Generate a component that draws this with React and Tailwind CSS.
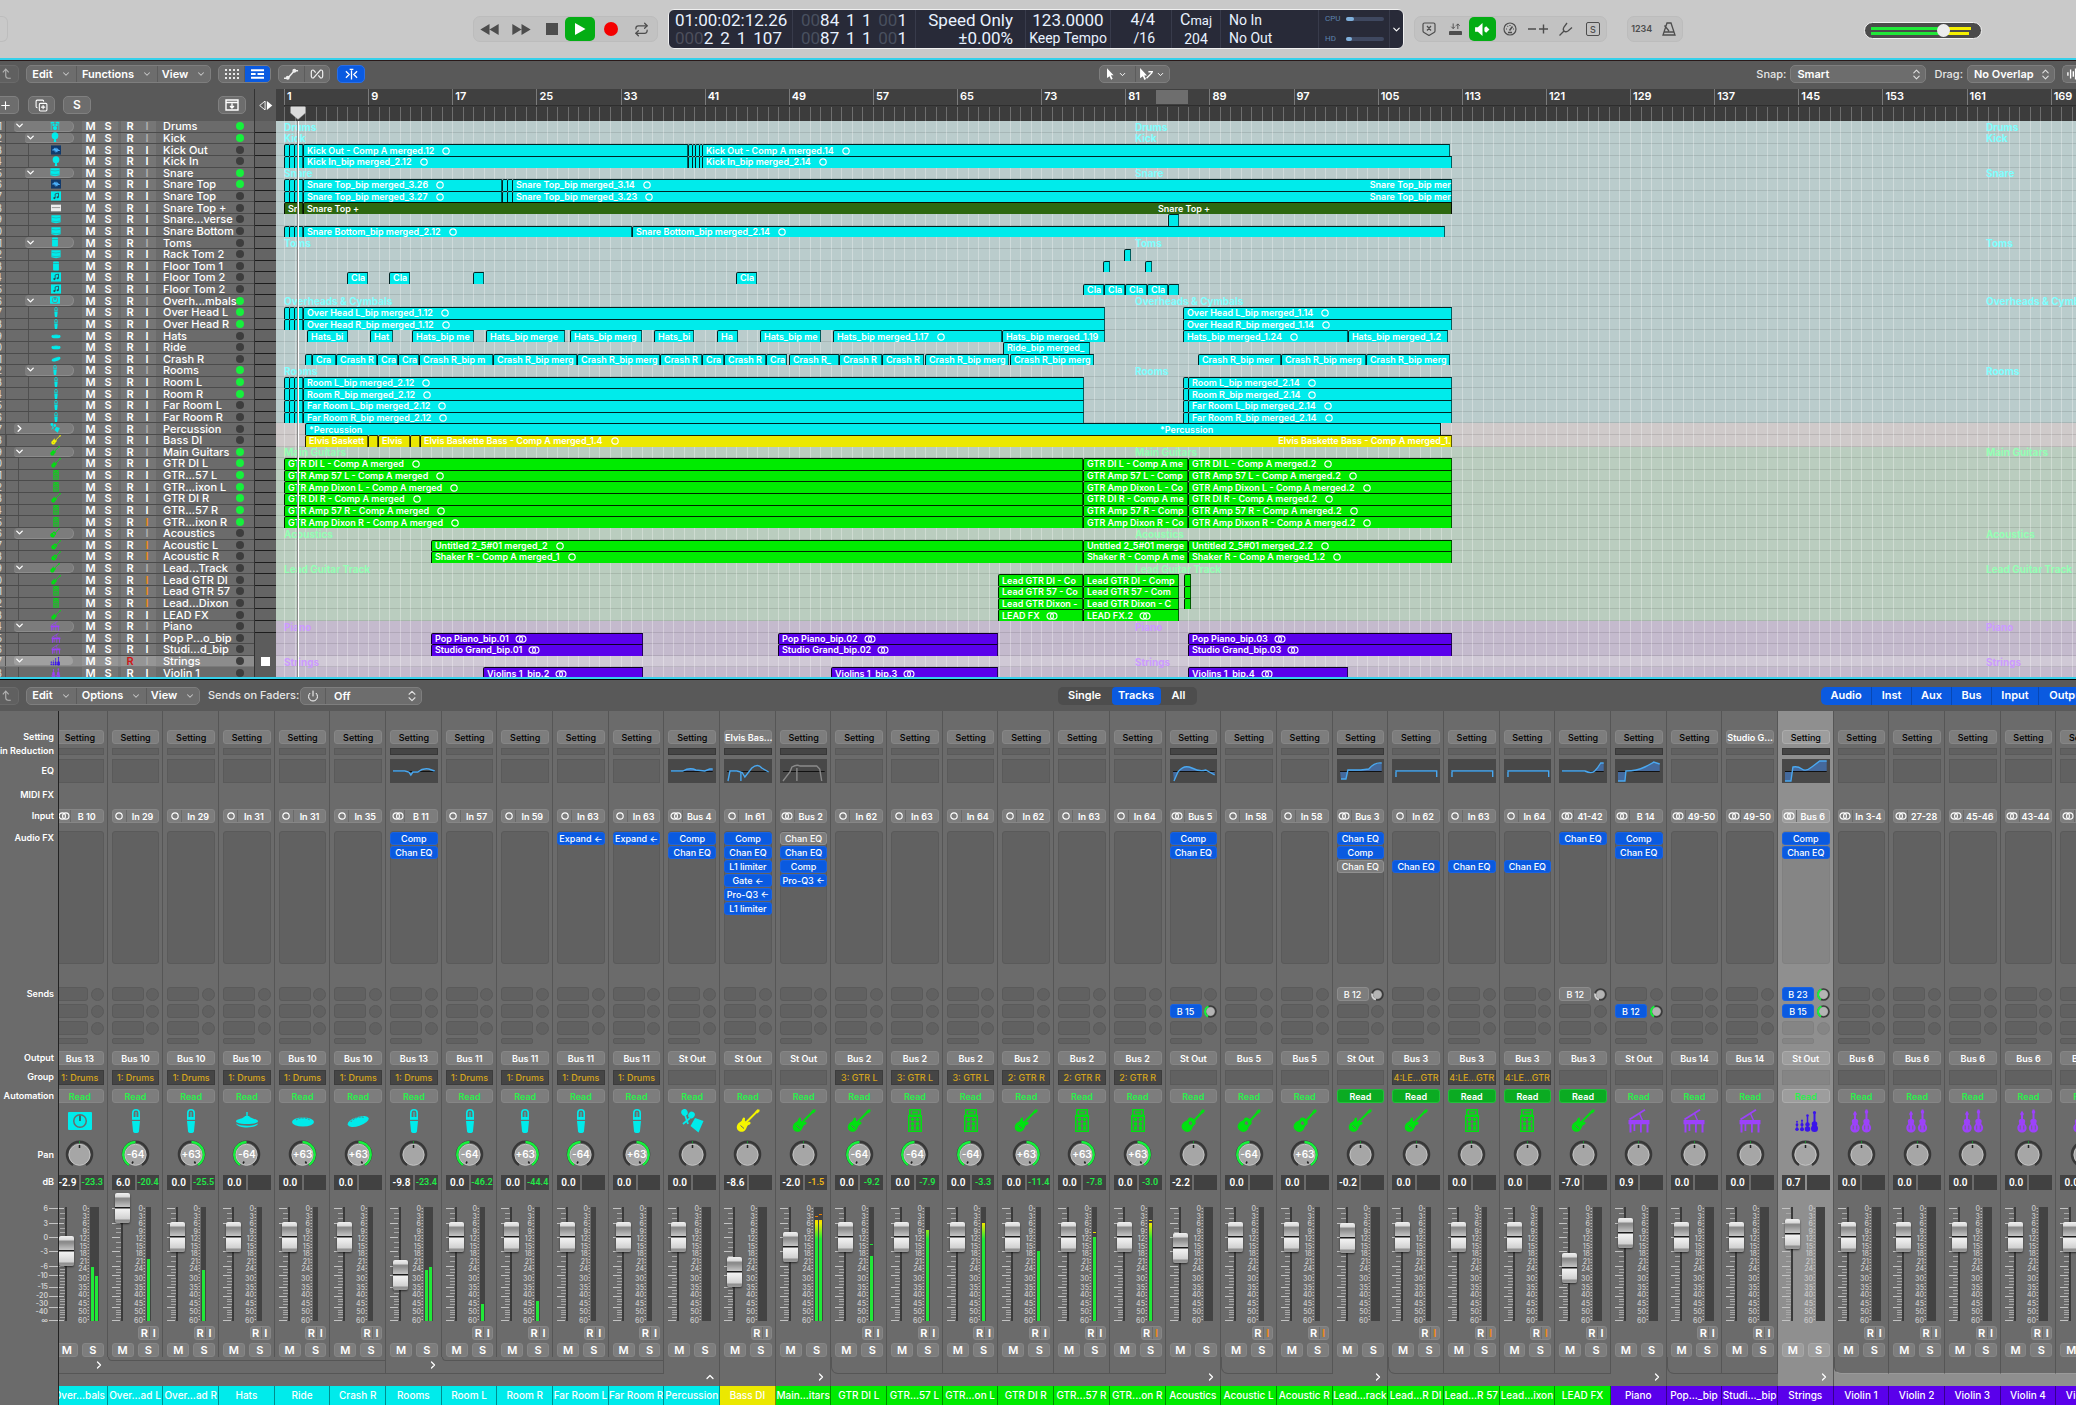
import React from "react";
import { ChevronDown, ChevronRight, ChevronUp, ChevronsUpDown, Repeat, Power, Plus, CopyPlus } from "lucide-react";

/* ---------- instrument and track icons ---------- */

const GLYPHS = {
  mic: (
    <>
      <path d="M8.800 8V4a3.200 3.200 0 0 1 6.400 0V8" fill="none" stroke="currentColor" strokeWidth="1.600" />
      <path d="M12 3v5" stroke="currentColor" strokeWidth="1" />
      <rect x="8" y="8" width="8" height="2.800" />
      <path d="M8 12h8l-1 10a3 2 0 0 1-6 0z" />
    </>
  ),
  cab: (
    <>
      <path fillRule="evenodd" d="M0 4a1 1 0 0 1 1-1h22a1 1 0 0 1 1 1v16a1 1 0 0 1-1 1H1a1 1 0 0 1-1-1zM12 5a7 7 0 1 0 0 14a7 7 0 0 0 0-14z" fill="currentColor" />
      <circle cx="12" cy="12" r="5.500" />
      <path d="M12 6.500v5.500" stroke="#444" strokeWidth="1.500" />
    </>
  ),
  hihat: (
    <>
      <path d="M11.300 3h1.400v5h-1.400z" />
      <path d="M2 11c2-1 7-2 8-4h4c1 2 6 3 8 4q2 1 0 2.500c-4 2-16 2-20 0q-2-1.500 0-2.500z" />
      <path d="M1 14.500c5 3 17 3 22 0c-1 5-20 5.500-22 0z" />
    </>
  ),
  ride: (
    <>
      <ellipse cx="12" cy="13" rx="11" ry="4.500" />
      <path d="M5 11q3-2 7-2t7 2" stroke="#6b6b6b" strokeWidth="0.800" fill="none" strokeDasharray="2 1" />
    </>
  ),
  crash: (
    <g transform="rotate(-18 12 12)">
      <ellipse cx="12" cy="12.500" rx="11" ry="4.500" />
      <path d="M5 10.500q3-2 7-2t7 2" stroke="#6b6b6b" strokeWidth="0.800" fill="none" strokeDasharray="2 1" />
    </g>
  ),
  perc: (
    <>
      <ellipse cx="4.500" cy="3.500" rx="3.200" ry="3.500" transform="rotate(-20 4.500 3.500)" />
      <ellipse cx="11.500" cy="6" rx="3.200" ry="3.500" transform="rotate(30 11.500 6)" />
      <path d="M5 6l3 9M10 9l-7 6" stroke="currentColor" strokeWidth="1.800" />
      <path d="M15 9l8.500 3-5 11.500-8-6.500z" />
    </>
  ),
  guitar: (
    <>
      <path d="M8 15.500L21 2.500" stroke="currentColor" strokeWidth="2" />
      <path d="M19.300 2.400l2.200-2.200 2.200.6-.4 2-2.200 1.600z" />
      <path d="M1.500 15.500c1-2 2.800-2.400 4-3.600c.8-.8.6-2.600 1.800-3.200c1.200-.5 2 .5 1.700 1.600c-.3 1-.1 1.700.7 2.300c.8.7 1.700 1 2.600.4c1.200-.8 2.600-.1 2.200 1.400c-.4 1.200-2 1.200-2.800 2.100c-1 1.200-1.100 3.200-2.600 4.800c-1.900 2-5 2-6.900.2c-1.800-1.700-1.800-4-.7-6z" />
      <path d="M4.500 16.500l3.500 3" stroke="#6b6b6b" strokeWidth="1" />
    </>
  ),
  acoustic: (
    <>
      <path d="M11 14L21 3" stroke="currentColor" strokeWidth="2" />
      <path d="M19.300 2.700l2.200-2.500 2.200.8-.4 2-2.200 1.700z" />
      <path fillRule="evenodd" d="M2 14c2-2.500 4-1.500 5-4c1.500-2.500 4.500-1.500 6 .5c2 1.800 2.500 4 .5 5.500c-2.500 1.500-1.500 3-3.500 5.300c-2.200 2.400-5.500 2-7.800-.3c-2-2-2.200-4.500-.2-7zM9.500 12.200a1.800 1.800 0 1 0 .1 0z" />
    </>
  ),
  amp: (
    <>
      <path fillRule="evenodd" d="M6 0h12v6h1v17H5V6h1zM7.500 1.500v4h9v-4zM6.500 8v13.500h11V8z" />
      <path d="M9 2.500h6v2H9z" />
      {[10.500, 14.800, 19].map((y) => (
        <React.Fragment key={y}>
          <circle cx="9.500" cy={y} r="1.900" />
          <circle cx="14.500" cy={y} r="1.900" />
        </React.Fragment>
      ))}
    </>
  ),
  piano: (
    <>
      <path d="M2.500 10.500L18 .8" stroke="currentColor" strokeWidth="1.800" />
      <path d="M12.500 4.500l3 7" stroke="currentColor" strokeWidth="1.400" />
      <path d="M1.500 11h21v4.200h-21zM2.500 15h2v8.500h-2zM6.500 15h1.800v7H6.500zM13 15h1.800v8.500H13zM19.500 15h2v8.500h-2z" />
    </>
  ),
  strings: (
    <>
      {[[3, 12, 0.700], [8, 11, 0.800], [13.500, 6, 1.100], [20.500, 3, 1.400]].map(([x, y, s]) => (
        <g key={x}>
          <path d={`M${x} ${y}V20`} stroke="currentColor" strokeWidth={1.400 * s} />
          <circle cx={x} cy={y + 0.500} r={1.100 * s} />
          <circle cx={x} cy={16.500 - s} r={2 * s} />
          <circle cx={x} cy={21 - s} r={2.500 * s} />
        </g>
      ))}
    </>
  ),
  violin: (
    <>
      {[[6, 2.500], [17.500, 0.500]].map(([x, y]) => (
        <g key={x}>
          <path d={`M${x} ${y}V16`} stroke="currentColor" strokeWidth="2" />
          <circle cx={x} cy={y + 2.500} r="1.800" />
          <path d={`M${x - 3.200} 12c0-3 6.400-3 6.400 0c0 2-1 2 0 3.500c3 3 1 8-3.200 8s-6.200-5-3.200-8c1-1.500 0-1.500 0-3.500z`} />
          <path d={`M${x - 1.800} 16.500v4M${x + 1.800} 16.500v4`} stroke="#6b6b6b" strokeWidth="0.800" />
        </g>
      ))}
    </>
  ),
  kit: (
    <>
      <ellipse cx="6" cy="4" rx="5" ry="2" />
      <ellipse cx="18" cy="4" rx="5" ry="2" />
      <rect x="6" y="7" width="5" height="5" />
      <rect x="13" y="7" width="5" height="5" />
      <circle cx="12" cy="17" r="5" />
      <path d="M3 5v17M21 5v17" stroke="currentColor" strokeWidth="1.500" />
    </>
  ),
  kick: (
    <>
      <ellipse cx="12" cy="9" rx="8" ry="8.500" />
      <path d="M10 16h4l1 8H9z" />
    </>
  ),
  snare: (
    <>
      <path d="M1 3h22v17q-11 4-22 0z" />
      <path d="M2 8q10 3 20 0M2 17q10 3 20 0" stroke="#3a9090" strokeWidth="1.200" fill="none" />
    </>
  ),
  tom: (
    <>
      <rect x="5" y="1" width="14" height="22" rx="2" />
      <path d="M5 6h14" stroke="#3a9090" strokeWidth="1.500" />
    </>
  ),
  wave: (
    <>
      <rect x="0" y="1" width="24" height="22" fill="#123a6b" />
      <path d="M3 12h3l2-3 2 6 2-8 2 10 2-7 2 3h3" stroke="#4fb4ff" strokeWidth="2.500" fill="none" />
    </>
  ),
  note: (
    <>
      <rect x="0" y="1" width="24" height="22" />
      <path d="M10 17V7l8-2v10" stroke="#2a4a55" strokeWidth="2" fill="none" />
      <circle cx="8" cy="17" r="2.500" fill="#2a4a55" />
      <circle cx="16" cy="15" r="2.500" fill="#2a4a55" />
    </>
  ),
  slot: (
    <>
      <rect x="0" y="4" width="24" height="16" fill="#ececec" />
      <path d="M2 11h20" stroke="#8a8a8a" strokeWidth="2" />
    </>
  ),
};

function Glyph({ name, className }) {
  return (
    <svg viewBox="0 0 24 24" fill="currentColor" className={className} aria-hidden="true">
      {GLYPHS[name]}
    </svg>
  );
}

function FormatMark({ stereo, className = "" }) {
  return stereo ? (
    <svg viewBox="0 0 13 9" className={"h-[8px] w-[12px] shrink-0 " + className} fill="none" stroke="currentColor" strokeWidth="1.300">
      <circle cx="4.500" cy="4.500" r="3.600" />
      <circle cx="8.500" cy="4.500" r="3.600" />
    </svg>
  ) : (
    <svg viewBox="0 0 9 9" className={"size-[8px] shrink-0 " + className} fill="none" stroke="currentColor" strokeWidth="1.300">
      <circle cx="4.500" cy="4.500" r="3.600" />
    </svg>
  );
}

/* ---------- colours ---------- */

const TINT = { c: "text-[#00ebeb]", y: "text-[#f5f500]", g: "text-[#00e010]", p: "text-[#9c42fa]", b: "text-[#3a14ea]" };
const FILL = { c: "bg-[#00ebeb]", y: "bg-[#ebe800]", g: "bg-[#00eb00]", p: "bg-[#5a00eb]", d: "bg-[#2d6810]" };
const LANE = { c: "bg-[#bacccc]", n: "bg-[#cfcaca]", g: "bg-[#bacdbf]", p: "bg-[#c4bacd]", s: "bg-[#d0c9d6]" };
const NAME = { c: "text-[#80ffff]", g: "text-[#94ffb4]", p: "text-[#cc9aff]" };

/* ---------- arrangement data: clips are [start, end, label, mark, extra] ---------- */

const ORIGIN = 284;
const SPAN = 1792;
const pct = (v) => `${(v / SPAN) * 100}%`;

const cuts = [[284, 289], [289, 294], [294, 303]];
const kickCuts = [[688, 692], [692, 695], [695, 699], [699, 702]];
const overhead = (n) => [...cuts, [303, 1105, `Over Head ${n}_bip merged_1.12`, "o"], [1183, 1452, `Over Head ${n}_bip merged_1.14`, "o"]];
const room = (n) => [...cuts, [303, 1084, `${n}_bip merged_2.12`, "o"], [1183, 1188], [1188, 1452, `${n}_bip merged_2.14`, "o"]];
const gtr = (n, mid) => [[284, 1083, `${n} - Comp A merged`, "o"], [1083, 1188, mid], [1188, 1452, `${n} - Comp A merged.2`, "o"]];

const TRACKS = [
  { n: "Drums", i: "kit", t: "c", lvl: 0, open: 1, on: 1, folder: "Drums" },
  { n: "Kick", i: "kick", t: "c", lvl: 1, open: 1, on: 1, folder: "Kick" },
  { n: "Kick Out", i: "wave", t: "c", clips: [...cuts, [303, 688, "Kick Out - Comp A merged.12", "o"], ...kickCuts, [702, 1450, "Kick Out - Comp A merged.14", "o"]] },
  { n: "Kick In", i: "kick", t: "c", clips: [...cuts, [303, 688, "Kick In_bip merged_2.12", "o"], ...kickCuts, [702, 1452, "Kick In_bip merged_2.14", "o"]] },
  { n: "Snare", i: "snare", t: "c", lvl: 1, open: 1, on: 1, folder: "Snare" },
  { n: "Snare Top", i: "wave", t: "c", on: 1, clips: [...cuts, [303, 502, "Snare Top_bip merged_3.26", "o"], [502, 507], [507, 512], [512, 1452, "Snare Top_bip merged_3.14", "o", { right: "Snare Top_bip mer" }]] },
  { n: "Snare Top", i: "note", t: "c", clips: [...cuts, [303, 502, "Snare Top_bip merged_3.27", "o"], [502, 507], [507, 512], [512, 1452, "Snare Top_bip merged_3.23", "o", { right: "Snare Top_bip mer" }]] },
  { n: "Snare Top +", i: "slot", t: "d", tint: "c", lane: "c", clips: [[284, 303, "Sn"], [303, 1155, "Snare Top +", "", { runs: true }], [1155, 1452, "Snare Top +", "", { joined: true }]] },
  { n: "Snare...verse", i: "snare", t: "c", clips: [[1168, 1179]] },
  { n: "Snare Bottom", i: "snare", t: "c", clips: [...cuts, [303, 632, "Snare Bottom_bip merged_2.12", "o"], [632, 1445, "Snare Bottom_bip merged_2.14", "o"]] },
  { n: "Toms", i: "tom", t: "c", lvl: 1, open: 1, folder: "Toms" },
  { n: "Rack Tom 2", i: "snare", t: "c", clips: [[1124, 1131]] },
  { n: "Floor Tom 1", i: "tom", t: "c", clips: [[1103, 1110], [1145, 1152]] },
  { n: "Floor Tom 2", i: "note", t: "c", clips: [[347, 368, "Cla"], [389, 410, "Cla"], [473, 484], [736, 757, "Cla"]] },
  { n: "Floor Tom 2", i: "note", t: "c", clips: [[1083, 1104, "Cla"], [1104, 1125, "Cla"], [1125, 1147, "Cla"], [1147, 1168, "Cla"], [1168, 1179]] },
  { n: "Overh...mbals", i: "cab", t: "c", lvl: 1, open: 1, on: 1, folder: "Overheads & Cymbals" },
  { n: "Over Head L", i: "mic", t: "c", on: 1, clips: overhead("L") },
  { n: "Over Head R", i: "mic", t: "c", on: 1, clips: overhead("R") },
  { n: "Hats", i: "ride", t: "c", clips: [[307, 348, "Hats_bi"], [370, 393, "Hat"], [412, 474, "Hats_bip me"], [486, 565, "Hats_bip merge"], [570, 642, "Hats_bip merg"], [654, 694, "Hats_bi"], [717, 738, "Ha"], [760, 821, "Hats_bip me"], [833, 1002, "Hats_bip merged_1.17", "o"], [1002, 1105, "Hats_bip merged_1.19"], [1183, 1348, "Hats_bip merged_1.24", "o"], [1348, 1448, "Hats_bip merged_1.2"]] },
  { n: "Ride", i: "ride", t: "c", clips: [[1003, 1090, "Ride_bip merged_"]] },
  { n: "Crash R", i: "crash", t: "c", clips: [[305, 312], [312, 336, "Cra"], [336, 377, "Crash R"], [377, 398, "Cra"], [398, 419, "Cra"], [419, 493, "Crash R_bip m"], [493, 577, "Crash R_bip merg"], [577, 660, "Crash R_bip merg"], [660, 702, "Crash R"], [702, 724, "Cra"], [724, 766, "Crash R"], [766, 787, "Cra"], [789, 839, "Crash R_"], [839, 882, "Crash R"], [882, 924, "Crash R"], [925, 1009, "Crash R_bip merg"], [1010, 1094, "Crash R_bip merg"], [1198, 1281, "Crash R_bip mer"], [1281, 1366, "Crash R_bip merg"], [1366, 1450, "Crash R_bip merg"]] },
  { n: "Rooms", i: "mic", t: "c", lvl: 1, open: 1, on: 1, folder: "Rooms" },
  { n: "Room L", i: "mic", t: "c", on: 1, clips: room("Room L") },
  { n: "Room R", i: "mic", t: "c", on: 1, clips: room("Room R") },
  { n: "Far Room L", i: "mic", t: "c", clips: room("Far Room L") },
  { n: "Far Room R", i: "mic", t: "c", clips: room("Far Room R") },
  { n: "Percussion", i: "perc", t: "c", lane: "n", lvl: 0, clips: [[305, 1157, "*Percussion", "", { runs: true }], [1157, 1441, "*Percussion", "", { joined: true }]] },
  { n: "Bass DI", i: "guitar", t: "y", lane: "n", top: 1, clips: [[305, 368, "Elvis Baskett"], [368, 378], [378, 410, "Elvis"], [410, 420], [420, 1452, "Elvis Baskette Bass - Comp A merged_1.4", "o", { right: "Elvis Baskette Bass - Comp A merged_1." }]] },
  { n: "Main Guitars", i: "guitar", t: "g", lvl: 0, open: 1, on: 1, folder: "Main Guitars" },
  { n: "GTR DI L", i: "guitar", t: "g", on: 1, clips: gtr("GTR DI L", "GTR DI L - Comp A me") },
  { n: "GTR...57 L", i: "amp", t: "g", on: 1, clips: gtr("GTR Amp 57 L", "GTR Amp 57 L - Comp") },
  { n: "GTR...ixon L", i: "amp", t: "g", on: 1, clips: gtr("GTR Amp Dixon L", "GTR Amp Dixon L - Co") },
  { n: "GTR DI R", i: "guitar", t: "g", on: 1, clips: gtr("GTR DI R", "GTR DI R - Comp A me") },
  { n: "GTR...57 R", i: "amp", t: "g", on: 1, clips: gtr("GTR Amp 57 R", "GTR Amp 57 R - Comp") },
  { n: "GTR...ixon R", i: "amp", t: "g", on: 1, mon: 1, clips: gtr("GTR Amp Dixon R", "GTR Amp Dixon R - Co") },
  { n: "Acoustics", i: "acoustic", t: "g", lvl: 0, open: 1, folder: "Acoustics" },
  { n: "Acoustic L", i: "acoustic", t: "g", mon: 1, clips: [[431, 1083, "Untitled 2_5#01 merged_2", "o"], [1083, 1188, "Untitled 2_5#01 merge"], [1188, 1452, "Untitled 2_5#01 merged_2.2", "o"]] },
  { n: "Acoustic R", i: "acoustic", t: "g", mon: 1, clips: [[431, 1083, "Shaker R - Comp A merged_1", "o"], [1083, 1188, "Shaker R - Comp A me"], [1188, 1452, "Shaker R - Comp A merged_1.2", "o"]] },
  { n: "Lead...Track", i: "guitar", t: "g", lvl: 0, open: 1, folder: "Lead Guitar Track" },
  { n: "Lead GTR DI", i: "guitar", t: "g", mon: 1, clips: [[998, 1083, "Lead GTR DI - Co"], [1083, 1179, "Lead GTR DI - Comp"], [1184, 1191]] },
  { n: "Lead GTR 57", i: "amp", t: "g", mon: 1, clips: [[998, 1083, "Lead GTR 57 - Co"], [1083, 1179, "Lead GTR 57 - Com"], [1184, 1191]] },
  { n: "Lead...Dixon", i: "amp", t: "g", mon: 1, clips: [[998, 1083, "Lead GTR Dixon -"], [1083, 1179, "Lead GTR Dixon - C"], [1184, 1191]] },
  { n: "LEAD FX", i: "guitar", t: "g", clips: [[998, 1083, "LEAD FX", "s"], [1083, 1179, "LEAD FX.2", "s"]] },
  { n: "Piano", i: "piano", t: "p", lvl: 0, open: 1, folder: "Piano" },
  { n: "Pop P...o_bip", i: "piano", t: "p", clips: [[431, 643, "Pop Piano_bip.01", "s"], [778, 998, "Pop Piano_bip.02", "s"], [1188, 1452, "Pop Piano_bip.03", "s"]] },
  { n: "Studi...d_bip", i: "piano", t: "p", clips: [[431, 643, "Studio Grand_bip.01", "s"], [778, 998, "Studio Grand_bip.02", "s"], [1188, 1452, "Studio Grand_bip.03", "s"]] },
  { n: "Strings", i: "strings", t: "p", tint: "b", lane: "s", lvl: 0, open: 1, sel: 1, folder: "Strings" },
  { n: "Violin 1", i: "violin", t: "p", clips: [[483, 643, "Violins 1_bip.2", "s"], [831, 998, "Violins 1_bip.3", "s"], [1188, 1348, "Violins 1_bip.4", "s"]] },
];

/* ---------- mixer data ---------- */

const EQ = {
  dip: "M3 12H15L19 13L21 16L23 13H28Q33 9 39 10L45 12",
  flat: "M3 12H15Q22 8 28 11L37 12L42 10H45",
  bass: "M4 22L6 12H13L17 13V22M18 13L21 18L28 9Q34 4 38 9L45 13",
  off: "M3 22L10 13L12 8Q17 5 20 7H37L40 10L42 22M17 9V22",
  hump: "M4 22L8 13Q14 5 22 9T36 11L45 16",
  rise: "M4 20H9L11 11H24L32 10Q38 3 45 4",
  line: "M4 18V12H45V18",
  shelf: "M3 12H26Q33 15 36 12T42 4H45",
  piano: "M3 22H10L11 12Q22 12 30 8T39 3L45 5",
  strings: "M3 22H9L11 8Q16 7 20 10T30 8L38 2H45",
};

const ch = (name, icon, color, input, out, o = {}) => ({ name, icon, color, input, out, db: "0.0", y: 83, ...o });
const D = "1: Drums";
const CHANNELS = [
  ch("Over...bals", "cab", "c", "B 10", "Bus 13", { st: 1, grp: D, db: "-2.9", pk: "-23.3", y: 69, lv: [54, 45], foot: "outer" }),
  ch("Over...ad L", "mic", "c", "In 29", "Bus 10", { grp: D, pan: -64, db: "6.0", pk: "-20.4", y: 112, lv: [62], foot: "deep", first: 1 }),
  ch("Over...ad R", "mic", "c", "In 29", "Bus 10", { grp: D, pan: 63, pk: "-25.5", lv: [51], foot: "deep" }),
  ch("Hats", "hihat", "c", "In 31", "Bus 10", { grp: D, pan: -64, foot: "deep" }),
  ch("Ride", "ride", "c", "In 31", "Bus 10", { grp: D, pan: 63, foot: "deep" }),
  ch("Crash R", "crash", "c", "In 35", "Bus 10", { grp: D, pan: 63, foot: "deep", last: 1 }),
  ch("Rooms", "mic", "c", "B 11", "Bus 13", { st: 1, grp: D, eq: "dip", gr: 1, fx: ["Comp", "Chan EQ"], db: "-9.8", pk: "-23.4", y: 45, lv: [51, 54], foot: "outer" }),
  ch("Room L", "mic", "c", "In 57", "Bus 11", { grp: D, pan: -64, pk: "-46.2", lv: [17], foot: "deep", first: 1 }),
  ch("Room R", "mic", "c", "In 59", "Bus 11", { grp: D, pan: 63, pk: "-44.4", lv: [20], foot: "deep" }),
  ch("Far Room L", "mic", "c", "In 63", "Bus 11", { grp: D, pan: -64, fx: ["Expand ←"], foot: "deep" }),
  ch("Far Room R", "mic", "c", "In 63", "Bus 11", { grp: D, pan: 63, fx: ["Expand ←"], foot: "deep", last: 1 }),
  ch("Percussion", "perc", "c", "Bus 4", "St Out", { st: 1, eq: "flat", gr: 1, fx: ["Comp", "Chan EQ"], foot: "top", chev: "up" }),
  ch("Bass DI", "guitar", "y", "In 61", "St Out", { setting: "Elvis Bas...", eq: "bass", gr: 1, fx: ["Comp", "Chan EQ", "L1 limiter", "Gate ←", "Pro-Q3 ←", "L1 limiter"], db: "-8.6", y: 48, rec: 1, wide: 1, foot: "top" }),
  ch("Main...itars", "guitar", "g", "Bus 2", "St Out", { st: 1, eq: "off", gr: 1, fx: ["-Chan EQ", "Chan EQ", "Comp", "Pro-Q3 ←"], db: "-2.0", pk: "-1.5", hot: 1, y: 73, lv: [101, 101], hold: [105, 107], foot: "top", chev: "right" }),
  ch("GTR DI L", "guitar", "g", "In 62", "Bus 2", { grp: "3: GTR L", pan: -64, pk: "-9.2", lv: [65], hold: [77], foot: "child", first: 1 }),
  ch("GTR...57 L", "amp", "g", "In 63", "Bus 2", { grp: "3: GTR L", pan: -64, pk: "-7.9", lv: [91], foot: "child" }),
  ch("GTR...on L", "amp", "g", "In 64", "Bus 2", { grp: "3: GTR L", pan: -64, pk: "-3.3", lv: [98], foot: "child" }),
  ch("GTR DI R", "guitar", "g", "In 62", "Bus 2", { grp: "2: GTR R", pan: 63, pk: "-11.4", lv: [70], foot: "child" }),
  ch("GTR...57 R", "amp", "g", "In 63", "Bus 2", { grp: "2: GTR R", pan: 63, pk: "-7.8", lv: [84], hold: [89], foot: "child" }),
  ch("GTR...on R", "amp", "g", "In 64", "Bus 2", { grp: "2: GTR R", pan: 63, pk: "-3.0", lv: [98], hold: [101], mon: 1, foot: "child" }),
  ch("Acoustics", "acoustic", "g", "Bus 5", "St Out", { st: 1, eq: "hump", gr: 1, fx: ["Comp", "Chan EQ"], sends: [null, "B 15"], db: "-2.2", y: 72, foot: "top", chev: "right" }),
  ch("Acoustic L", "acoustic", "g", "In 58", "Bus 5", { pan: -64, mon: 1, foot: "child", first: 1 }),
  ch("Acoustic R", "acoustic", "g", "In 58", "Bus 5", { pan: 63, mon: 1, foot: "child" }),
  ch("Lead...rack", "guitar", "g", "Bus 3", "St Out", { st: 1, eq: "rise", gr: 1, fx: ["Chan EQ", "Comp", "-Chan EQ"], sends: ["-B 12"], read: 1, db: "-0.2", y: 82, foot: "top", chev: "right" }),
  ch("Lead...R DI", "guitar", "g", "In 62", "Bus 3", { grp: "4:LE...GTR", eq: "line", fx: [null, null, "Chan EQ"], read: 1, mon: 1, foot: "child", first: 1 }),
  ch("Lead...R 57", "amp", "g", "In 63", "Bus 3", { grp: "4:LE...GTR", eq: "line", fx: [null, null, "Chan EQ"], read: 1, mon: 1, foot: "child" }),
  ch("Lead...ixon", "amp", "g", "In 64", "Bus 3", { grp: "4:LE...GTR", eq: "line", fx: [null, null, "Chan EQ"], read: 1, mon: 1, foot: "child" }),
  ch("LEAD FX", "guitar", "g", "41-42", "Bus 3", { st: 1, rec: 1, wide: 1, eq: "shelf", fx: ["Chan EQ"], sends: ["-B 12"], read: 1, db: "-7.0", y: 52, foot: "child" }),
  ch("Piano", "piano", "p", "B 14", "St Out", { st: 1, eq: "piano", gr: 1, fx: ["Comp", "Chan EQ"], sends: [null, "B 12"], db: "0.9", y: 87, foot: "top", chev: "right" }),
  ch("Pop..._bip", "piano", "p", "49-50", "Bus 14", { st: 1, rec: 1, foot: "child", first: 1 }),
  ch("Studi..._bip", "piano", "p", "49-50", "Bus 14", { st: 1, rec: 1, setting: "Studio G...", foot: "child" }),
  ch("Strings", "strings", "p", "Bus 6", "St Out", { st: 1, tint: "b", sel: 1, eq: "strings", gr: 1, fx: ["Comp", "Chan EQ"], sends: ["B 23", "B 15"], db: "0.7", y: 86, foot: "top", chev: "right" }),
  ch("Violin 1", "violin", "p", "In 3-4", "Bus 6", { st: 1, rec: 1, foot: "child", first: 1, lit: 1 }),
  ch("Violin 2", "violin", "p", "27-28", "Bus 6", { st: 1, rec: 1, foot: "child", lit: 1 }),
  ch("Violin 3", "violin", "p", "45-46", "Bus 6", { st: 1, rec: 1, foot: "child", lit: 1 }),
  ch("Violin 4", "violin", "p", "43-44", "Bus 6", { st: 1, rec: 1, foot: "child", lit: 1 }),
  ch("Violin 5", "violin", "p", "47-48", "Bus 6", { st: 1, rec: 1, foot: "child", lit: 1 }),
];

/* ---------- shared controls ---------- */

const GROUP = "flex h-[18px] shrink-0 items-stretch overflow-hidden rounded-[5px] border border-[#7e7e7e] bg-[#6d6d6d] text-[11px] font-semibold text-white";
const cell = "flex items-center justify-center border-l border-[#5c5c5c] first:border-l-0";

function Menu({ label, className }) {
  return (
    <button className={`${cell} gap-2 ${className}`}>
      {label}
      <ChevronDown className="size-[10px] text-[#c8c8c8]" strokeWidth={2.500} />
    </button>
  );
}

function Select({ label, value, options, className }) {
  return (
    <label className="flex shrink-0 items-center gap-1 text-[11px] font-medium text-[#e6e6e6]">
      {label}
      <span className={`relative flex h-[18px] items-center rounded-[5px] border border-[#7e7e7e] bg-[#6d6d6d] ${className}`}>
        <select defaultValue={value} className="h-full w-full appearance-none bg-transparent pl-1.5 text-[11px] font-semibold text-white outline-none">
          {options.map((o) => (
            <option key={o}>{o}</option>
          ))}
        </select>
        <ChevronsUpDown className="pointer-events-none absolute right-0.5 size-[13px] text-[#e0e0e0]" strokeWidth={2} />
      </span>
    </label>
  );
}

function BackButton() {
  return (
    <button aria-label="Back" className="flex h-[18px] w-[19px] shrink-0 items-center rounded-r-[5px] border border-l-0 border-[#6a6a6a] bg-[#606060]">
      <svg viewBox="0 0 12 14" className="ml-0.5 h-[12px] w-[10px]" fill="none" stroke="#b4b4b4" strokeWidth="1.300">
        <path d="M1 5l3.500-4 3.500 4M4.500 1v8q0 3 3 3h3" />
      </svg>
    </button>
  );
}

/* ---------- transport bar ---------- */

function Dim({ children, light }) {
  return <span className={light ? "text-[#49505f]" : "text-[#4d4f5c]"}>{children}</span>;
}

function Lcd() {
  const col = "flex h-full flex-col justify-center border-r border-[#383b4b] text-[16px] leading-[18px] text-[#e8f2ff] whitespace-pre";
  return (
    <div className="grid h-[40px] grid-cols-[124px_123px_110px_85px_61px_49px_98px_71px_13px] rounded-[6px] border border-[#f0f0f0] bg-[#282a38] font-[Roboto,sans-serif]">
      <div className={col + " pl-1.5"}>
        <span className="text-[17px]">01:00:02:12.26</span>
        <span className="flex justify-between pr-2.5 text-[17px]"><span><Dim>000</Dim>2</span><span>2</span><span>1</span><span>107</span></span>
      </div>
      <div className={col + " px-2 text-[#9db4d6]"}>
        <span className="flex justify-between text-[17px]"><span><Dim light>00</Dim>84</span><span>1</span><span>1</span><span><Dim light>00</Dim>1</span></span>
        <span className="flex justify-between text-[17px]"><span><Dim light>00</Dim>87</span><span>1</span><span>1</span><span><Dim light>00</Dim>1</span></span>
      </div>
      <div className={col + " items-end pr-3"}><span className="text-[17px]">Speed Only</span><span className="text-[17px]">±0.00%</span></div>
      <div className={col + " items-center"}><span className="text-[17px]">123.0000</span><span className="text-[14px]">Keep Tempo</span></div>
      <div className={col + " items-end pr-4"}><span>4/4</span><span className="text-[14px]">/16</span></div>
      <div className={col + " items-center"}><span>C<span className="text-[13px]">maj</span></span><span className="text-[14px]">204</span></div>
      <div className={col + " pl-2"}><span className="text-[14px]">No In</span><span className="text-[14px]">No Out</span></div>
      <div className="flex flex-col justify-center gap-2 border-r border-[#383b4b] pl-1.5 text-[8px] text-[#5d83ad]">
        <span className="flex items-center gap-1.5 leading-[12px]"><span className="w-[15px]">CPU</span><span className="flex h-[4px] w-[38px] rounded-full bg-[#3f4860]"><span className="h-full w-2 rounded-full bg-[#7fb0dc]" /></span></span>
        <span className="flex items-center gap-1.5 leading-[12px]"><span className="w-[15px]">HD</span><span className="flex h-[4px] w-[38px] rounded-full bg-[#3f4860]"><span className="h-full w-1.5 rounded-full bg-[#7fb0dc]" /></span></span>
      </div>
      <button aria-label="Display mode" className="flex items-center justify-center"><ChevronDown className="size-[11px] text-white" strokeWidth={2.500} /></button>
    </div>
  );
}

function Transport() {
  const btn = "flex items-center justify-center";
  const ink = "text-[#4d4d4d]";
  return (
    <header className="flex h-[58px] shrink-0 items-start bg-[#c9c9c9] pt-[9px]">
      <div className="mt-[7px] h-[26px] w-[8px] rounded-r-[6px] border border-l-0 border-[#bdbdbd]" />
      <div className="w-[465px] shrink" />
      <div className="mt-[7px] flex h-[26px] w-[185px] shrink-0 items-center rounded-[7px] border border-[#bcbcbc] bg-[#c2c2c2]">
        <button aria-label="Rewind" className={btn + " w-[31px]"}>
          <svg viewBox="0 0 20 12" className="h-[11px] w-[19px]" fill="#4d4d4d"><path d="M10 0v12L0 6zM20 0v12L10 6z" /></svg>
        </button>
        <button aria-label="Forward" className={btn + " w-[33px]"}>
          <svg viewBox="0 0 20 12" className="h-[11px] w-[19px]" fill="#4d4d4d"><path d="M0 0v12l10-6zM10 0v12l10-6z" /></svg>
        </button>
        <button aria-label="Stop" className={btn + " w-[27px]"}><span className="size-[12px] bg-[#4d4d4d]" /></button>
        <button aria-label="Play" className={btn + " h-[24px] w-[30px] rounded-[5px] bg-[#04ad14]"}>
          <svg viewBox="0 0 12 12" className="size-[12px]" fill="#fff"><path d="M1 0l10.500 6L1 12z" /></svg>
        </button>
        <button aria-label="Record" className={btn + " w-[31px]"}><span className="size-[14px] rounded-full bg-[#f40000]" /></button>
        <button aria-label="Cycle" className={btn + " w-[31px]"}><Repeat className={"size-[15px] " + ink} strokeWidth={2} /></button>
      </div>
      <div className="w-[10px] shrink-0" />
      <Lcd />
      <div className="w-[10px] shrink-0" />
      <div className="mt-[7px] flex h-[26px] w-[193px] shrink-0 items-center rounded-[7px] border border-[#bcbcbc] bg-[#c2c2c2]">
        <button aria-label="Replace" className={btn + " w-[27px]"}>
          <svg viewBox="0 0 14 14" className="size-[14px]" fill="none" stroke="#4d4d4d" strokeWidth="1.200"><path d="M2.500 1h9q1.500 0 1.500 1.500V9q0 1-1 1.500L7 13.500 2 10.500Q1 10 1 9V2.500Q1 1 2.500 1zM5 4l4 4.500M9 4L5 8.500" /></svg>
        </button>
        <button aria-label="Autopunch" className={btn + " w-[27px]"}>
          <svg viewBox="0 0 14 14" className="size-[13px]" fill="#4d4d4d"><rect x="0" y="8.500" width="14" height="4.500" rx="1" /><path d="M4.500 0.500v5.500M2.500 4l2 2 2-2M9.500 6.500V1M7.500 3l2-2 2 2" fill="none" stroke="#4d4d4d" /></svg>
        </button>
        <button aria-label="Input monitoring" className={btn + " h-[24px] w-[27px] rounded-[5px] bg-[#04ad14]"}>
          <svg viewBox="0 0 16 14" className="h-[13px] w-[15px]" fill="#fff"><path d="M0 4.500h3L8 0v14L3 9.500H0z" /><path d="M10 5l2-1.500 3.500 3.500L12 10.500 10 9z" /></svg>
        </button>
        <button aria-label="Low latency" className={btn + " w-[28px]"}>
          <svg viewBox="0 0 14 14" className="size-[14px]" fill="none" stroke="#4d4d4d" strokeWidth="1.200"><circle cx="7" cy="7" r="6" /><path d="M5 10.500h4M6.500 8.500L9.500 4.500" strokeWidth="1.500" /><path d="M3 7h1M10 7h1M4.500 4l.6.6M7 3v1" /></svg>
        </button>
        <button aria-label="Varispeed" className={btn + " w-[27px]"}>
          <svg viewBox="0 0 20 10" className="h-[10px] w-[20px]" fill="none" stroke="#4d4d4d" strokeWidth="1.400"><path d="M0 5h8M11 5h9M15.500 0.500v9" /></svg>
        </button>
        <button aria-label="Tuner" className={btn + " w-[29px]"}>
          <svg viewBox="0 0 14 14" className="size-[14px]" fill="none" stroke="#4d4d4d" strokeWidth="1.300"><path d="M0.500 13.500L5 9M8 1L5 5q-1.500 2.500 0 4t4 0l4-3.500" /></svg>
        </button>
        <button aria-label="Solo" className={btn + " w-[26px]"}><span className="flex size-[14px] items-center justify-center rounded-[2px] border border-[#4d4d4d] text-[9px] leading-none font-medium text-[#4d4d4d]">S</span></button>
      </div>
      <div className="w-[20px] shrink-0" />
      <div className="mt-[7px] flex h-[26px] w-[56px] shrink-0 items-center rounded-[7px] border border-[#bcbcbc] bg-[#c2c2c2]">
        <button aria-label="Count in" className={btn + " w-[28px] text-[9px] font-semibold text-[#4d4d4d]"}>1234</button>
        <button aria-label="Metronome" className={btn + " w-[27px]"}>
          <svg viewBox="0 0 14 14" className="size-[14px]" fill="none" stroke="#4d4d4d" strokeWidth="1.300"><path d="M5 1h4l4 12H1zM2 10h10M7 9L2.500 3.500" /></svg>
        </button>
      </div>
      <div className="grow" />
      <label className="relative mt-[13px] mr-[94px] flex h-[17px] w-[118px] shrink-0 flex-col justify-center gap-[2px] rounded-full border border-[#f2f2f2] bg-[#4b4b4b] px-1.5">
        <span className="h-[3px] w-[100px] bg-[linear-gradient(to_right,#20e838_75%,#f5f000_75%)]" />
        <span className="h-[3px] w-[98px] bg-[linear-gradient(to_right,#20e838_75%,#f5f000_75%)]" />
        <input type="range" aria-label="Master volume" defaultValue={70} className="absolute inset-0 h-full w-full appearance-none bg-transparent outline-none [&::-webkit-slider-thumb]:size-[13px] [&::-webkit-slider-thumb]:appearance-none [&::-webkit-slider-thumb]:rounded-full [&::-webkit-slider-thumb]:bg-[#ececec]" />
      </label>
    </header>
  );
}

/* ---------- arrangement ---------- */

function ArrangeToolbar() {
  return (
    <div className="flex h-[28px] shrink-0 items-center overflow-hidden bg-[#595959] pb-[2px]">
      <BackButton />
      <div className="w-[7px] shrink-0" />
      <div className={GROUP}>
        <Menu label="Edit" className="w-[49px]" />
        <Menu label="Functions" className="w-[81px]" />
        <Menu label="View" className="w-[53px]" />
      </div>
      <div className="w-[7px] shrink-0" />
      <div className={GROUP}>
        <button aria-label="Grid view" className={cell + " w-[25px]"}>
          <svg viewBox="0 0 14 10" className="h-[10px] w-[14px]" fill="#e8e8e8">
            {[0, 4, 8].map((y) => [0, 4, 8, 12].map((x) => <rect key={x + "-" + y} x={x} y={y} width="2" height="2" />))}
          </svg>
        </button>
        <button aria-label="Tracks view" className={cell + " w-[26px] bg-[#0a5ae0]"}>
          <svg viewBox="0 0 14 10" className="h-[10px] w-[13px]" fill="#fff"><path d="M0 0h14v2H0zM0 4h5v2H0zM7 4h7v2H7zM0 8h14v2H0z" /></svg>
        </button>
      </div>
      <div className="w-[7px] shrink-0" />
      <div className={GROUP}>
        <button aria-label="Automation" className={cell + " w-[25px]"}>
          <svg viewBox="0 0 16 12" className="h-[12px] w-[15px]" fill="none" stroke="#eee" strokeWidth="1.600"><path d="M0 10.500h4l7-8h4" /><circle cx="4" cy="10" r="1.300" fill="#eee" /><circle cx="11" cy="2.500" r="1.300" fill="#eee" /></svg>
        </button>
        <button aria-label="Flex" className={cell + " w-[25px]"}>
          <svg viewBox="0 0 16 12" className="h-[12px] w-[14px]" fill="none" stroke="#eee" strokeWidth="1.400"><path d="M4 1.500Q1.500 1 1.500 4v4q0 3 2.500 2.500L12 1.500Q14.500 1 14.500 4v4q0 3-2.500 2.500L9.500 7.500M4 1.500L6.500 4.500" /></svg>
        </button>
      </div>
      <div className="w-[7px] shrink-0" />
      <button aria-label="Catch playhead" className="flex h-[18px] w-[28px] shrink-0 items-center justify-center rounded-[5px] border border-[#2a6fe6] bg-[#0a5ae0]">
        <svg viewBox="0 0 14 12" className="h-[12px] w-[13px]" fill="none" stroke="#fff" strokeWidth="1.400"><path d="M7 2v10M5 1h4M1 3l3.500 3.500L1 10M13 3L9.500 6.500 13 10" /></svg>
      </button>
      <div className="grow-5" />
      <div className={GROUP}>
        <button aria-label="Pointer tool" className={cell + " w-[35px] gap-1"}>
          <svg viewBox="0 0 8 13" className="h-[12px] w-[7px]" fill="#fff"><path d="M0 0l7.500 8H4.500l2 4-1.800 1L3 9 0 11z" /></svg>
          <ChevronDown className="size-[9px]" strokeWidth={2.500} />
        </button>
        <button aria-label="Marquee tool" className={cell + " w-[34px] gap-0.5"}>
          <svg viewBox="0 0 15 13" className="h-[12px] w-[14px]" fill="#fff"><path d="M0 0l7.500 8H4.500l2 4-1.800 1L3 9 0 11z" /><path d="M7 11L13 5M9 4h5" stroke="#fff" strokeWidth="1.500" /></svg>
          <ChevronDown className="size-[9px]" strokeWidth={2.500} />
        </button>
      </div>
      <div className="grow-4" />
      <Select label="Snap:" value="Smart" options={["Smart", "Bar", "Beat"]} className="w-[136px]" />
      <div className="w-[8px] shrink-0" />
      <Select label="Drag:" value="No Overlap" options={["No Overlap", "Overlap", "X-Fade"]} className="w-[88px]" />
      <div className="w-[7px] shrink-0" />
      <button aria-label="Waveform zoom" className="flex h-[18px] w-[14px] shrink-0 items-center justify-end overflow-hidden rounded-l-[5px] border border-r-0 border-[#7e7e7e] bg-[#6d6d6d]">
        <svg viewBox="0 0 10 12" className="h-[12px] w-[9px]" stroke="#fff" strokeWidth="1.500"><path d="M1 4v4M4 1v10M7 3v6M9.500 0v12" /></svg>
      </button>
    </div>
  );
}

function TrackHeaderBar() {
  const b = "flex h-[18px] items-center justify-center border border-[#808080] bg-[#6d6d6d] text-white";
  return (
    <div className="flex h-[32px] shrink-0 items-center bg-[#595959]">
      <button aria-label="Add track" className={b + " w-[19px] rounded-r-[5px] border-l-0 pr-2"}><Plus className="size-[13px] shrink-0" strokeWidth={2} /></button>
      <div className="w-[9px]" />
      <button aria-label="Duplicate track" className={b + " w-[27px] rounded-[5px]"}><CopyPlus className="size-[13px]" strokeWidth={2} /></button>
      <div className="w-[8px]" />
      <button aria-label="Global solo" className={b + " w-[28px] rounded-[5px] text-[12px] font-semibold"}>S</button>
      <div className="grow" />
      <button aria-label="Track options" className={b + " mr-[8px] w-[28px] rounded-[5px]"}>
        <svg viewBox="0 0 14 12" className="h-[12px] w-[14px]" fill="none" stroke="#fff" strokeWidth="1.400"><path d="M1 1h12v10H1zM1 3.500h12M7 4.500V9M5 7l2 2 2-2" /></svg>
      </button>
    </div>
  );
}

function TrackRow({ t, index }) {
  const folder = t.lvl !== undefined;
  const ms = "flex items-center justify-center text-[11px] leading-[10px] font-semibold text-white";
  return (
    <div className={`flex min-h-0 items-stretch border-b ${t.sel ? "border-[#7a7a7a] bg-[#8c8c8c]" : "border-[#4b4b4b] bg-[#6b6b6b]"}`}>
      <div className="flex w-[6px] shrink-0 items-center overflow-hidden border-r border-[#505050]">
        <div className="flex w-[2px] justify-end overflow-hidden text-[10px] leading-[10px] text-[#e0e0e0]">{index + 1}</div>
      </div>
      <div className="flex w-[68px] shrink-0 justify-end">
        <div className={`flex items-center ${folder ? `rounded-l-[4px] rounded-r-[6px] border-r border-b border-[#8c8c8c] ${t.sel ? "bg-[#a0a0a0]" : "bg-[#7c7c7c]"}` : "border-l border-[#505050]"} ${t.lvl === 0 ? "w-[60px]" : t.lvl === 1 ? "w-[49px]" : t.top ? "w-[68px]" : t.t === "c" || t.t === "d" ? "w-[46px]" : "w-[56px]"}`}>
          {folder && (t.open ? <ChevronDown className="size-[11px] text-white" strokeWidth={3} /> : <ChevronRight className="size-[11px] text-white" strokeWidth={3} />)}
          <div className="grow" />
          <Glyph name={t.i} className={`mr-[13px] size-[10px] ${TINT[t.tint || t.t]}`} />
        </div>
      </div>
      <div className="w-[8px] shrink-0" />
      <div className="flex w-[36px] shrink-0 bg-white/8">
        <button className={ms + " w-[17px]"}>M</button>
        <button className={ms + " w-[18px]"}>S</button>
      </div>
      <div className="w-[3px] shrink-0" />
      <div className="flex w-[35px] shrink-0 bg-white/8">
        <button className={`${ms} w-[18px] ${t.sel ? "!text-[#d01818]" : ""}`}>R</button>
        <button className={`${ms} w-[16px] ${t.mon ? "!text-[#f08a18]" : folder ? "!text-[#b0b0b0]" : ""}`}>I</button>
      </div>
      <div className="flex w-[75px] shrink-0 items-center pl-[7px] text-[11px] leading-[10px] font-medium whitespace-nowrap text-white">{t.n}</div>
      <div className="flex w-[18px] shrink-0 items-center justify-center">
        <span className={`size-[8px] rounded-full ${t.on ? "bg-[#16f03c]" : "bg-[#3d3d3d]"}`} />
      </div>
    </div>
  );
}

function Lane({ t }) {
  const lane = LANE[t.lane || t.t];
  let cursor = ORIGIN;
  return (
    <div className={`min-h-0 border-b border-black/10 pl-[8px] ${lane}`}>
      <div className="relative z-10 flex h-[calc(100%+1px)] items-stretch">
        {t.folder &&
          [ORIGIN, 1135, 1986].map((x, k, all) => (
            <span key={x} className={`flex shrink-0 items-center text-[10px] leading-[10px] font-bold whitespace-nowrap ${NAME[t.t]}`} style={{ width: pct((all[k + 1] || 2076) - x) }}>
              {t.folder}
            </span>
          ))}
        {t.clips &&
          t.clips.map(([a, b, label, mark, extra = {}]) => {
            const gap = a - cursor;
            cursor = b;
            return (
              <div
                key={a}
                className={`flex shrink-0 items-center border-t border-black/85 text-[9px] leading-[10px] font-semibold whitespace-nowrap text-white ${extra.joined ? "border-r" : "rounded-tl-[2px] border-l"} ${b - a > 5 && !extra.joined && !extra.runs ? "border-r border-r-black/60" : ""} ${FILL[t.t]}`}
                style={{ marginLeft: pct(gap), width: pct(b - a) }}
              >
                {label && <span className="pl-[3px]">{label}</span>}
                {mark && <FormatMark stereo={mark === "s"} className={mark === "s" ? "ml-1.5" : "ml-2"} />}
                {extra.right && <span className="ml-auto">{extra.right}</span>}
              </div>
            );
          })}
      </div>
    </div>
  );
}

function Ruler() {
  return (
    <div className="relative h-[32px] shrink-0 overflow-hidden bg-[#404040] pl-[8px]">
      <div className="flex h-[16px]">
        {Array.from({ length: 22 }, (_, k) => (
          <span key={k} className="h-[16px] shrink-0 border-l border-[#7a7a7a] pl-[2px] text-[11px] leading-[14px] font-semibold text-white" style={{ width: pct(84.130) }}>
            {k * 8 + 1}
          </span>
        ))}
      </div>
      <div className="flex h-[16px] border-t border-[#2e2e2e] bg-[#3c3c3c] pt-px">
        {Array.from({ length: 171 }, (_, k) => (
          <span key={k} className="h-full shrink-0 border-l border-[#6e6e6e]" style={{ width: pct(10.516) }} />
        ))}
      </div>
      <div className="absolute top-px h-[14px] w-[32px] bg-[#6e6e6e]" style={{ left: "48.900%" }} />
      <svg viewBox="0 0 16 14" className="absolute top-[17px] left-[14px] h-[14px] w-[16px]" fill="#dcdcdc" stroke="#8a8a8a" strokeWidth="0.500"><path d="M0.500 1.500q0-1 1-1h13q1 0 1 1V7L8 13.500 0.500 7z" /></svg>
    </div>
  );
}

function Arrangement() {
  const rows = "grid h-[calc(100%+2px)] grid-rows-[repeat(48,minmax(0,1fr))]";
  return (
    <section className="flex min-h-0 grow">
      <div className="flex w-[254px] shrink-0 flex-col">
        <TrackHeaderBar />
        <div className="min-h-0 flex-1 overflow-hidden">
          <div className={rows}>{TRACKS.map((t, k) => <TrackRow key={k} t={t} index={k} />)}</div>
        </div>
      </div>
      <div className="flex w-[22px] shrink-0 flex-col border-l border-[#333] bg-[#5c5c5c]">
        <div className="flex h-[32px] shrink-0 items-center justify-center bg-[#595959]">
          <svg viewBox="0 0 15 10" className="h-[9px] w-[14px]"><path d="M6.500 0v10L0.500 5z" fill="none" stroke="#fff" /><path d="M8.500 0v10l6-5z" fill="#fff" /></svg>
        </div>
        <div className="min-h-0 flex-1 overflow-hidden">
          <div className={rows}>
            {TRACKS.map((t, k) => (
              <div key={k} className={`flex min-h-0 items-center justify-center ${k < 44 ? "border-b border-[#1c1c1c] bg-[#646464]" : ""}`}>
                {t.sel && <span className="size-[9px] bg-white" />}
              </div>
            ))}
          </div>
        </div>
      </div>
      <div className="flex min-w-0 flex-1 flex-col">
        <Ruler />
        <div className="relative min-h-0 flex-1 overflow-hidden">
          <div className={rows}>{TRACKS.map((t, k) => <Lane key={k} t={t} />)}</div>
          <div className="pointer-events-none absolute inset-0 flex overflow-hidden pl-[8px]">
            {Array.from({ length: 171 }, (_, k) => (
              <span key={k} className="shrink-0 border-l border-white/30" style={{ width: pct(10.516) }} />
            ))}
          </div>
          <div className="pointer-events-none absolute inset-y-0 left-[21px] z-20 w-[2px] border-l border-[#8a8a8a] bg-white" />
        </div>
      </div>
    </section>
  );
}

/* ---------- mixer ---------- */

function MixerToolbar() {
  return (
    <div className="flex h-[31px] shrink-0 items-center overflow-hidden bg-[#595959] text-[11px]">
      <BackButton />
      <div className="w-[7px] shrink-0" />
      <div className={GROUP}>
        <Menu label="Edit" className="w-[49px]" />
        <Menu label="Options" className="w-[70px]" />
        <Menu label="View" className="w-[53px]" />
      </div>
      <label htmlFor="sends-on-faders" className="ml-[8px] w-[89px] shrink-0 text-[11px] font-medium whitespace-nowrap text-[#e6e6e6]">Sends on Faders:</label>
      <div className={GROUP + " relative ml-[3px] w-[122px]"}>
        <button aria-label="Enable sends on faders" className={cell + " w-[24px]"}><Power className="size-[12px]" strokeWidth={2} /></button>
        <select id="sends-on-faders" defaultValue="Off" className="grow appearance-none border-l border-[#5c5c5c] bg-transparent pl-2 font-semibold text-white outline-none">
          <option>Off</option>
          <option>Send 1</option>
        </select>
        <ChevronsUpDown className="pointer-events-none absolute top-px right-0.5 size-[14px] text-[#e0e0e0]" />
      </div>
      <div className="grow-[636]" />
      <div className="flex h-[18px] shrink-0 overflow-hidden rounded-[5px] bg-[#4d4d4d] font-semibold text-white">
        <button className="w-[54px]">Single</button>
        <button className="w-[49px] rounded-[4px] bg-[#0a5ae0]">Tracks</button>
        <button className="w-[36px]">All</button>
      </div>
      <div className="grow-[625]" />
      <div className="flex h-[18px] w-[255px] shrink-0 overflow-hidden rounded-l-[5px] bg-[#0a5ae0] font-semibold text-white">
        {[["Audio", "w-[50px]"], ["Inst", "w-[40px]"], ["Aux", "w-[40px]"], ["Bus", "w-[40px]"], ["Input", "w-[47px]"], ["Output", "w-[58px]"]].map(([n, w]) => (
          <button key={n} className={`shrink-0 border-l border-[#0848b4] first:border-l-0 ${w}`}>{n}</button>
        ))}
      </div>
    </div>
  );
}

const FADER_MAJOR = [15, 30, 44, 58, 73, 82, 94, 103, 114, 127];
const FADER_MINOR = [20, 25, 35, 39, 49, 54, 63, 68, 76, 79, 85, 88, 91, 97, 100, 106, 108, 111, 117, 119, 121, 124];
const METER = [[0, 15], [3, 23], [6, 30], [9, 38], [12, 45], [15, 53], [18, 60], [21, 68], [24, 75], [30, 85], [35, 94], [40, 101], [45, 110], [50, 118], [60, 127]];

function FaderScale({ c }) {
  const wide = c.wide || c.st;
  const bars = c.lv || [];
  return (
    <svg viewBox="0 0 48 142" className="pointer-events-none absolute top-0 left-0 h-[142px] w-[48px]">
      <path d={FADER_MAJOR.map((y) => `M0 ${y + 0.500}h8`).join("")} stroke="#c4c4c4" />
      <path d={FADER_MINOR.map((y) => `M4 ${y + 0.500}h5`).join("")} stroke="#a8a8a8" />
      <rect x="9" y="14" width="2" height="114" fill="#3a3a3a" />
      {METER.map(([n, y]) => (
        <text key={n} x="31" y={y + 3} textAnchor="end" fontSize="7" fontWeight="500" fill="#cacaca">{n}</text>
      ))}
      <path d={Array.from({ length: 38 }, (_, k) => `M31.500 ${15.500 + k * 3}h1.500`).join("")} stroke="#bdbdbd" />
      <rect x="34" y="14" width={wide ? 9 : 5} height="114" fill="#434343" />
      {bars.map((h, k) => (
        <g key={k}>
          <rect x={35 + k * 4} y={128 - h} width="3" height={h} fill="url(#level)" />
          {c.hold && <rect x={35 + k * 4} y={128 - c.hold[k]} width="3" height="1" fill={c.hot ? "#f08000" : c.hold[k] > 85 ? "#f0e000" : "#20e838"} />}
        </g>
      ))}
    </svg>
  );
}

const THUMB =
  "[&::-webkit-slider-thumb]:h-[30px] [&::-webkit-slider-thumb]:w-[15px] [&::-webkit-slider-thumb]:appearance-none [&::-webkit-slider-thumb]:rounded-[2px] [&::-webkit-slider-thumb]:shadow-[0_1px_2px_rgba(0,0,0,0.6)] [&::-webkit-slider-thumb]:bg-[linear-gradient(to_bottom,#f0f0f0_0px,#d8d8d8_4px,#8a8a8a_5px,#8e8e8e_7px,#c6c6c6_14px,#1a1a1a_14px,#1a1a1a_15px,#f2f2f2_16px,#e6e6e6_20px,#d0d0d0_26px,#8e8e8e_27px,#9c9c9c_30px)]";

function Knob({ pan = 0 }) {
  return (
    <label className="relative mt-[7px] block h-[29px] w-[29px] self-center">
      <svg viewBox="0 0 29 29" className="size-[29px]">
        <path d="M8 25A12.500 12.500 0 1 1 21 25" fill="none" stroke="#383838" strokeWidth="2.500" />
        {pan < 0 && <path d="M8 25A12.500 12.500 0 0 1 14.500 2" fill="none" stroke="#16f03c" strokeWidth="2.500" />}
        {pan > 0 && <path d="M14.500 2A12.500 12.500 0 0 1 21 25" fill="none" stroke="#16f03c" strokeWidth="2.500" />}
        {!pan && <path d="M14.500 1v2.500" stroke="#1d8a30" strokeWidth="1" />}
        <circle cx="14.500" cy="14.800" r="10.500" fill="#a6a6a6" stroke="#c4c4c4" strokeWidth="1" />
        {pan < 0 ? <path d="M11 23.500l1.200-2" stroke="#222" strokeWidth="1.500" /> : pan > 0 ? <path d="M18.500 23.500l-1.200-2" stroke="#222" strokeWidth="1.500" /> : <path d="M14.500 5v3" stroke="#222" strokeWidth="1.500" />}
      </svg>
      {pan !== 0 && <span className="absolute inset-0 flex items-center justify-center text-[10px] font-semibold text-white">{pan > 0 ? `+${pan}` : pan}</span>}
      <input type="range" aria-label="Pan" min={-64} max={63} defaultValue={pan} className="absolute inset-0 size-full opacity-0" />
    </label>
  );
}

function SendKnob({ off }) {
  return (
    <svg viewBox="0 0 13 13" className="size-[13px] shrink-0">
      <circle cx="6.500" cy="6.500" r="5.500" fill="none" stroke="#3a3a3a" strokeWidth="1.600" />
      <path d={off ? "M5 11.500A5.500 5.500 0 0 1 1.200 5.500" : "M4 11.500A5.500 5.500 0 0 1 4.500 1.500"} fill="none" stroke={off ? "#d0d0d0" : "#16f03c"} strokeWidth="2" />
      <circle cx="6.500" cy="6.500" r="4.200" fill="#b4b4b4" />
    </svg>
  );
}

function Footer({ c }) {
  const line = c.lit ? "border-b-[#9a9a9a]" : "border-b-[#565656]";
  const below = c.lit ? "bg-[#8f8f8f]" : "";
  if (c.foot === "deep")
    return (
      <div className="flex h-[29px] flex-col">
        <div className={`flex h-[17px] flex-col border-b border-[#565656] ${c.last ? "border-r" : ""}`}>
          <div className={`h-[4px] border-b border-[#565656] ${c.first ? "rounded-bl-[6px] border-l" : ""}`} />
        </div>
      </div>
    );
  if (c.foot === "outer")
    return (
      <div className="flex h-[29px] flex-col">
        <div className="flex h-[17px] items-center justify-end border-b border-[#565656] pr-[3px]"><ChevronRight className="size-[12px] text-white" strokeWidth={2.500} /></div>
      </div>
    );
  if (c.foot === "child")
    return (
      <div className={`h-[29px] ${below}`}>
        <div className={`h-[17px] border-r border-b border-[#565656] bg-[#6b6b6b] ${line} ${c.first ? "rounded-bl-[7px] border-l" : ""}`} />
      </div>
    );
  return (
    <div className={`flex h-[29px] items-end justify-end border-r border-[#565656] pr-[3px] pb-[3px] ${c.sel ? "bg-[#8f8f8f]" : ""}`}>
      {c.chev === "right" && <ChevronRight className="size-[12px] text-white" strokeWidth={2.500} />}
      {c.chev === "up" && <ChevronUp className="size-[12px] text-white" strokeWidth={2.500} />}
    </div>
  );
}

function Strip({ c }) {
  const btn = `h-[14px] w-full shrink-0 rounded-[3px] border text-[9px] leading-[11px] font-semibold whitespace-nowrap ${c.sel ? "border-[#acacac] bg-[#9d9d9d]" : "border-[#868686] bg-[#7d7d7d]"}`;
  const hole = c.sel ? "border border-[#808080] bg-[#858585]" : "border border-[#5a5a5a] bg-[#616161]";
  const fx = c.fx || [];
  const sends = c.sends || [];
  const small = `h-[14px] rounded-[3px] border text-[11px] leading-[12px] font-semibold text-white ${c.sel ? "border-[#a8a8a8] bg-[#9d9d9d]" : "border-[#868686] bg-[#7d7d7d]"}`;
  return (
    <div className="flex min-w-0 flex-col">
      <div className={`flex flex-col border-r border-[#565656] pr-[3px] pl-[4px] ${c.sel ? "bg-[#8f8f8f]" : ""}`}>
        <button className={`${btn} mt-[19px] ${c.setting ? "text-white" : "!font-medium text-black"}`}>{c.setting || "Setting"}</button>
        <div className={`mt-[4px] h-[7px] ${c.gr ? "border border-[#383838] bg-[#454545]" : hole}`} />
        <div className={`mt-[4px] h-[24px] ${c.eq ? "bg-[#484848]" : hole}`}>
          {c.eq && (
            <svg viewBox="0 0 48 24" preserveAspectRatio="none" className="h-[24px] w-full">
              {!["dip", "bass", "off", "line"].includes(c.eq) && <path d={`${EQ[c.eq]}V12H3z`} fill="#44699c" />}
              <path d="M3 12.500H45" stroke="#111" />
              <path d={EQ[c.eq]} fill="none" stroke={c.eq === "off" ? "#8a8a8a" : "#4aa8f0"} strokeWidth="1.400" />
            </svg>
          )}
        </div>
        <button className={`${btn} mt-[26px] flex items-stretch text-white`}>
          <span className="flex w-[14px] shrink-0 items-center justify-center border-r border-[#6a6a6a]"><FormatMark stereo={c.st} /></span>
          <span className="flex grow items-center justify-center">{c.input}</span>
        </button>
        <div className={`mt-[8px] flex h-[133px] flex-col gap-px rounded-[3px] ${hole}`}>
          {fx.map((f, k) =>
            f ? (
              <button key={k} className={`-mx-px h-[13px] shrink-0 rounded-[3px] border text-[9px] leading-[11px] font-medium whitespace-nowrap text-white ${f[0] === "-" ? "border-[#909090] bg-[#7d7d7d]" : "border-[#1a62e0] bg-[#0a5ae0]"}`}>
                {f[0] === "-" ? f.slice(1) : f}
              </button>
            ) : (
              <div key={k} className="h-[13px] shrink-0" />
            )
          )}
        </div>
        <div className="mt-[23px] flex h-[56px] flex-col gap-[3px]">
          {[0, 1, 2].map((k) => {
            const s = sends[k];
            const off = s && s[0] === "-";
            return (
              <div key={k} className="flex h-[14px] items-center justify-between">
                {s ? (
                  <>
                    <button className={`h-[14px] w-[32px] rounded-[3px] border text-[9px] leading-[11px] font-medium text-white ${off ? "border-[#8c8c8c] bg-[#7d7d7d]" : "border-[#1a62e0] bg-[#0a5ae0]"}`}>{off ? s.slice(1) : s}</button>
                    <SendKnob off={off} />
                  </>
                ) : (
                  <>
                    <div className={`h-[14px] w-[32px] rounded-[3px] ${hole}`} />
                    <div className={`size-[13px] rounded-full ${hole}`} />
                  </>
                )}
              </div>
            );
          })}
          <div className={`h-[6px] w-[32px] shrink-0 rounded-[2px] ${hole}`} />
        </div>
        <button className={`${btn} mt-[8px] text-white`}>{c.out}</button>
        <button aria-label="Group" className={`mt-[5px] h-[15px] shrink-0 text-[9px] leading-[13px] font-medium whitespace-nowrap text-[#d6a520] ${c.grp ? "border border-[#3c3c3c] bg-[#454545]" : hole}`}>{c.grp}</button>
        <button className={`${btn} mt-[4px] ${c.read ? "!border-[#1fc238] !bg-[#0bab22] text-white" : "text-[#2bf04c]"}`}>Read</button>
        <Glyph name={c.icon} className={`mt-[6px] size-[24px] self-center ${TINT[c.tint || c.color]}`} />
        <Knob pan={c.pan} />
        <div className="mt-[6px] grid h-[15px] grid-cols-2 gap-[2px] font-[Roboto,sans-serif] text-[10px] leading-[15px] font-semibold">
          <span className="flex justify-center bg-[#414141] text-white">{c.db}</span>
          <span className={`flex justify-center bg-[#414141] text-[9px] ${c.hot ? "text-[#f0b818]" : "text-[#22e848]"}`}>{c.pk}</span>
        </div>
        <div className="relative mt-[3px] flex h-[142px] justify-between">
          <FaderScale c={c} />
          <input
            type="range"
            aria-label={`${c.name} volume`}
            min={0}
            max={112}
            defaultValue={c.y}
            className={`relative ml-[3px] h-[142px] w-[15px] appearance-none bg-transparent outline-none [direction:rtl] [writing-mode:vertical-lr] ${THUMB}`}
          />
          {(c.rec || !c.st) && (
            <div className={`${small} mt-[133px] flex w-[21px]`}>
              <button className="w-[11px] border-r border-[#6a6a6a]">R</button>
              <button className={`grow ${c.mon ? "text-[#f08a18]" : ""}`}>I</button>
            </div>
          )}
        </div>
        <div className="mt-[8px] grid grid-cols-2 gap-[4px]">
          <button className={small}>M</button>
          <button className={small}>S</button>
        </div>
      </div>
      <Footer c={c} />
      <div className={`flex h-[19px] items-center justify-center overflow-hidden border-r border-black/40 text-[10px] font-medium whitespace-nowrap text-white ${FILL[c.color]}`}>{c.name}</div>
    </div>
  );
}

const LABELS = [
  ["Setting", "mt-[19px]"], ["Gain Reduction", "mt-0"], ["EQ", "mt-[6px]"], ["MIDI FX", "mt-[10px]"], ["Input", "mt-[7px]"], ["Audio FX", "mt-[8px]"],
  ["Sends", "mt-[142px]"], ["Output", "mt-[50px]"], ["Group", "mt-[5px]"], ["Automation", "mt-[5px]"], ["Pan", "mt-[45px]"], ["dB", "mt-[13px]"],
];
const FADER_LABELS = [["6", 15], ["3", 30], ["0", 44], ["-3", 58], ["-6", 73], ["-10", 82], ["-15", 93], ["-20", 102], ["-30", 110], ["-40", 118], ["∞", 127]];

function Mixer() {
  return (
    <section className="flex shrink-0 overflow-hidden bg-[#6b6b6b]">
      <svg className="absolute size-0" aria-hidden="true">
        <linearGradient id="level" gradientUnits="userSpaceOnUse" x1="0" y1="14" x2="0" y2="128">
          <stop offset="0.050" stopColor="#f5a800" />
          <stop offset="0.140" stopColor="#f5e800" />
          <stop offset="0.280" stopColor="#20e838" />
        </linearGradient>
      </svg>
      <div className="flex w-[59px] shrink-0 flex-col items-end overflow-hidden border-r border-[#222] pr-[4px] text-[9px] leading-[14px] font-semibold whitespace-nowrap text-white">
        {LABELS.map(([n, m]) => (
          <span key={n} className={`h-[14px] shrink-0 ${m}`}>{n}</span>
        ))}
        <svg viewBox="0 0 59 142" className="-mr-[4px] mt-[4px] h-[142px] w-[59px] shrink-0">
          {FADER_LABELS.map(([n, y]) => (
            <text key={n} x="49" y={y + 3} textAnchor="end" fontSize="7" fill="#d0d0d0">{n}</text>
          ))}
          <path d={FADER_MAJOR.map((y) => `M50 ${y + 0.500}h9`).join("")} stroke="#c4c4c4" />
        </svg>
      </div>
      <div className="min-w-0 flex-1 overflow-hidden">
        <div className="-ml-[7px] grid w-[calc(100%+43px)] grid-cols-[repeat(37,minmax(0,1fr))]">
          {CHANNELS.map((c) => (
            <Strip key={c.name} c={c} />
          ))}
        </div>
      </div>
    </section>
  );
}

export default function App() {
  return (
    <main className="flex h-screen flex-col overflow-hidden bg-[#595959] font-[Inter,sans-serif]">
      <Transport />
      <div className="h-[3px] shrink-0 border-b border-[#2a1a1a] bg-[#35d0ea]" />
      <ArrangeToolbar />
      <Arrangement />
      <div className="h-[3px] shrink-0 border-b border-black bg-[#35d0ea]" />
      <MixerToolbar />
      <Mixer />
    </main>
  );
}
